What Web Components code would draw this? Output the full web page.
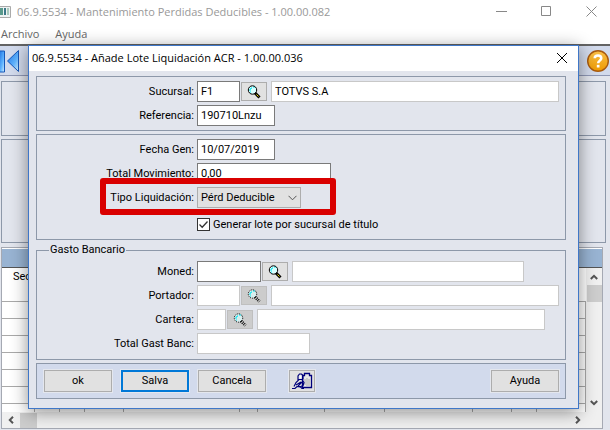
<!DOCTYPE html>
<html lang="es">
<head>
<meta charset="utf-8">
<title>Mantenimiento Perdidas Deducibles</title>
<style>
  html, body { height: 100%; margin: 0; }
  body { font: 11px/14px Roboto, "Liberation Sans", sans-serif; color: #000; background: #e2e5ed; overflow: hidden; }
</style>
</head>
<body>
<app-window caption="06.9.5534 - Mantenimiento Perdidas Deducibles - 1.00.00.082">
  <modal-dialog slot="dialog" caption="06.9.5534 - Añade Lote Liquidación ACR - 1.00.00.036">
    <group-box>
      <form-field label="Sucursal:" value="F1" size="43">
        <lookup-button label="Buscar sucursal"></lookup-button>
        <text-box label="Nombre de la sucursal" value="TOTVS S.A"></text-box>
      </form-field>
      <form-field label="Referencia:" value="190710Lnzu" size="78"></form-field>
    </group-box>
    <group-box>
      <form-field label="Fecha Gen:" value="10/07/2019" size="78"></form-field>
      <form-field label="Total Movimiento:" value="0,00" size="134"></form-field>
      <select-field label="Tipo Liquidación:" value="Pérd Deducible"></select-field>
      <check-field label="Generar lote por sucursal de título"></check-field>
    </group-box>
    <group-box legend="Gasto Bancario">
      <form-field label="Moned:" size="64">
        <lookup-button label="Buscar moneda"></lookup-button>
        <text-box label="Nombre de la moneda" size="232"></text-box>
      </form-field>
      <form-field label="Portador:" size="43" quiet>
        <lookup-button label="Buscar portador" disabled></lookup-button>
        <text-box label="Nombre del portador"></text-box>
      </form-field>
      <form-field label="Cartera:" size="29" quiet>
        <lookup-button label="Buscar cartera" disabled></lookup-button>
        <text-box label="Nombre de la cartera" size="288"></text-box>
      </form-field>
      <form-field label="Total Gast Banc:" size="113" quiet></form-field>
    </group-box>
    <button-bar slot="footer">
      <push-button>ok</push-button>
      <push-button primary>Salva</push-button>
      <push-button>Cancela</push-button>
      <push-button icon label="Adjuntar">
        <svg width="24" height="18" viewBox="0 0 24 18">
          <path d="M12.500 3.500h2v-2h5v2h2v12h-9z" fill="#e8e8e8" stroke="#00007b" stroke-width="1.300"/>
          <path d="M15 7v6M17 6v8M19 7v7" stroke="#aaa"/>
          <path d="M2 16.500h3l2-2h3l2 2h2M4 14.500l2-4 3-3h3l2 3-1 3-3 1.500-3-.5M8 8V4l1.500-2h2L13 3.500v4M6 13l5-3M8 14l4-4" fill="none" stroke="#00007b" stroke-width="1.200"/>
          <path d="M9.500 3.500h2v3h-2z" fill="#fff"/>
        </svg>
      </push-button>
      <push-button slot="end">Ayuda</push-button>
    </button-bar>
  </modal-dialog>
</app-window>

<script>
const define = (name, template, setup) => {
  const tpl = document.createElement('template');
  tpl.innerHTML = '<style>*{box-sizing:border-box}button,input,select{font:inherit;color:inherit;margin:0}</style>' + template;
  customElements.define(name, class extends HTMLElement {
    connectedCallback() {
      if (this.shadowRoot) return;
      const root = this.attachShadow({ mode: 'open' });
      root.append(tpl.content.cloneNode(true));
      if (setup) setup(this, root);
    }
  });
};

define('text-box', `
  <style>
    :host { display: block; flex: 1; min-width: 0; }
    :host([size]) { flex: none; }
    input { display: block; width: 100%; height: 21px; padding: 0 3px; border: 1px solid #c8c8c8; border-radius: 0; background: #fff; }
  </style>
  <input type="text" readonly>`,
  (el, root) => {
    const input = root.querySelector('input');
    input.value = el.getAttribute('value') || '';
    input.setAttribute('aria-label', el.getAttribute('label'));
    if (el.hasAttribute('size')) el.style.width = el.getAttribute('size') + 'px';
  });

define('lookup-button', `
  <style>
    :host { display: block; }
    button { display: grid; place-items: center; width: 26px; height: 19px; padding: 0; border: 1px solid #adadad; background: #e1e1e1; }
    button:disabled { background: #ccc; border-color: #bfbfbf; }
    :host([disabled]) .line { stroke-dasharray: 1 1; }
    :host([disabled]) .handle { stroke-dasharray: 1 1; }
    :host([disabled]) .shine { fill: #d8eeee; }
    :host([disabled]) .grip { stroke: #bbb; }
  </style>
  <button type="button">
    <svg width="14" height="14" viewBox="0 0 14 14">
      <circle class="shine" cx="5.500" cy="5" r="4" fill="#d8ffff"/>
      <path d="M3 6V4h1V3h1M6 2h2M3 7h1" fill="none" stroke="#00e5f0"/>
      <circle class="line" cx="5.500" cy="5" r="4.200" fill="none" stroke="#000"/>
      <path class="handle" d="M8 8l4.500 4.500" stroke="#000" stroke-width="3"/>
      <path class="grip" d="M9.500 9.500l2 2" stroke="#f0e000"/>
    </svg>
  </button>`,
  (el, root) => {
    const b = root.querySelector('button');
    b.setAttribute('aria-label', el.getAttribute('label'));
    b.disabled = el.hasAttribute('disabled');
  });

define('form-field', `
  <style>
    :host { display: grid; grid-template-columns: 157px 1fr; column-gap: 3px; align-items: center; }
    label { text-align: right; }
    div { display: flex; align-items: center; gap: 1px; min-width: 0; }
    ::slotted(text-box) { margin-left: 3px; }
    input { flex: none; height: 21px; padding: 0 3px 1px; border: 1px solid #7a7a7a; border-radius: 0; background: #fff; }
    :host([quiet]) input { border-color: #c8c8c8; }
  </style>
  <label for="f"></label>
  <div><input id="f" type="text"><slot></slot></div>`,
  (el, root) => {
    root.querySelector('label').textContent = el.getAttribute('label');
    const input = root.querySelector('input');
    input.value = el.getAttribute('value') || '';
    input.style.width = el.getAttribute('size') + 'px';
  });

define('select-field', `
  <style>
    :host { display: grid; grid-template-columns: 157px 1fr; column-gap: 3px; align-items: center; position: relative; }
    label { text-align: right; }
    .pick { display: flex; align-items: center; }
    select { appearance: none; width: 104px; height: 21px; padding: 0 3px; border: 1px solid #adadad; border-radius: 0; background: #e1e1e1; }
    svg { margin-left: -13px; pointer-events: none; }
    .mark { position: absolute; left: 63px; top: -9px; width: 236px; height: 37px; border: 6px solid #d90000; border-radius: 3px; pointer-events: none; }
  </style>
  <label for="s"></label>
  <div class="pick"><select id="s"><option></option></select>
    <svg width="9" height="6" viewBox="0 0 9 6"><path d="M.5.800l4 4 4-4" fill="none" stroke="#555"/></svg></div>
  <div class="mark"></div>`,
  (el, root) => {
    root.querySelector('label').textContent = el.getAttribute('label');
    root.querySelector('option').textContent = el.getAttribute('value');
  });

define('check-field', `
  <style>
    :host { display: flex; align-items: center; gap: 3px; height: 21px; margin: 3px 0 0 160px; }
    input { appearance: none; width: 13px; height: 13px; border: 1px solid #333; background: #fff; }
    input:checked { background: #fff url("data:image/svg+xml,%3Csvg xmlns='http://www.w3.org/2000/svg' viewBox='0 0 11 11'%3E%3Cpath d='M1.500 5.500l2.700 2.700 5.300-5.700' fill='none' stroke='%23333' stroke-width='1.300'/%3E%3C/svg%3E") center / 11px 11px no-repeat; }
  </style>
  <input id="c" type="checkbox" checked><label for="c"></label>`,
  (el, root) => { root.querySelector('label').textContent = el.getAttribute('label'); });

define('group-box', `
  <style>
    :host { display: block; }
    fieldset { display: grid; gap: 3px; margin: 0; min-width: 0; padding: 4px 6px 4px 0; border: 1px solid #8d98a9; }
    legend { margin-left: 12px; padding: 0 1px; }
    legend:empty { display: none; }
    :host([legend]) fieldset { padding: 4px 6px 5px 0; }
  </style>
  <fieldset><legend></legend><slot></slot></fieldset>`,
  (el, root) => { root.querySelector('legend').textContent = el.getAttribute('legend') || ''; });

define('push-button', `
  <style>
    :host { display: block; }
    button { display: grid; place-items: center; width: 68px; height: 22px; padding: 0; border: 1px solid #adadad; background: #e1e1e1; box-shadow: 0 0 0 1px #e4e7ee; }
    :host([primary]) button { border: 2px solid #0078d7; }
    :host([icon]) button { width: 26px; }
  </style>
  <button type="button"><slot></slot></button>`,
  (el, root) => {
    if (el.hasAttribute('label')) root.querySelector('button').setAttribute('aria-label', el.getAttribute('label'));
  });

define('button-bar', `
  <style>
    :host { display: flex; align-items: center; gap: 9px; height: 34px; padding: 0 6px 0 7px; border: 1px solid #8d98a9; background: #d2daec; }
    ::slotted([icon]) { margin-left: 14px; }
    .end { margin-left: auto; }
  </style>
  <slot></slot><div class="end"><slot name="end"></slot></div>`);

define('modal-dialog', `
  <style>
    :host { display: block; border: 1px solid #3f77c8; background: #e2e5ed; box-shadow: 0 3px 16px rgba(0,0,0,.45); }
    header { display: flex; align-items: center; justify-content: space-between; height: 25px; padding: 0 10px 2px 3px; background: #fff; font-family: "Open Sans", sans-serif; }
    button { display: grid; padding: 0; border: 0; background: none; }
    main { display: grid; gap: 3px; padding: 5px 12px 9px 7px; }
  </style>
  <header><span></span>
    <button type="button" aria-label="Cerrar"><svg width="12" height="12" viewBox="0 0 12 12"><path d="M1 1l10 10M11 1L1 11" stroke="#000" fill="none"/></svg></button>
  </header>
  <main><slot></slot><slot name="footer"></slot></main>`,
  (el, root) => { root.querySelector('span').textContent = el.getAttribute('caption'); });

define('scroll-bar', `
  <style>
    :host { display: flex; align-items: center; justify-content: space-between; background: #f0f0f0; padding: 0 5px; }
    :host([vertical]) { flex-direction: column; padding: 6px 0; }
    i { width: 17px; height: 15px; background: #cdcdcd; }
    :host([vertical]) i { width: 15px; height: 17px; margin-top: 5px; }
    b { flex: 1; }
    :host(:not([vertical])) i { margin-left: 5px; }
    :host(:not([vertical])) svg { transform: rotate(-90deg); }
  </style>
  <svg width="8" height="6" viewBox="0 0 8 6"><path d="M.8 5L4 1.800 7.200 5" fill="none" stroke="#555" stroke-width="2"/></svg>
  <i></i><b></b>
  <svg width="8" height="6" viewBox="0 0 8 6"><path d="M.8 1L4 4.200 7.200 1" fill="none" stroke="#555" stroke-width="2"/></svg>`);

define('data-grid', `
  <style>
    :host { display: grid; grid-template: 20px 1fr 16px / 1fr 16px; border: 1px solid #a5a9b3; background: #fff; overflow: hidden; }
    .band { grid-column: 1 / -1; margin-top: 1px; background: #98b3d2; border-bottom: 1px solid #555; }
    .body { overflow: hidden; min-height: 0; }
    table { width: 100%; border-collapse: separate; border-spacing: 0; table-layout: fixed; }
    th, td { padding: 0; height: 17px; border: 0 solid #a9a9a9; border-width: 0 1px 1px 0; }
    th { height: 34px; font-weight: normal; text-align: left; vertical-align: top; padding: 2px 0 0 11px; border-right: 0; }
    .h { grid-column: 1 / -1; padding-right: 20px; }
  </style>
  <div class="band"></div>
  <div class="body"><table><colgroup></colgroup><thead><tr></tr></thead><tbody></tbody></table></div>
  <scroll-bar vertical></scroll-bar>
  <scroll-bar class="h"></scroll-bar>`,
  (el, root) => {
    const widths = [33, 25, 25, 39, 116, 18, 67, 60, 88, 39, 25];
    root.querySelector('colgroup').innerHTML = widths.map(w => `<col style="width:${w}px">`).join('') + '<col>';
    root.querySelector('thead tr').innerHTML = '<th>Sec</th>' + '<th></th>'.repeat(widths.length);
    root.querySelector('tbody').innerHTML = ('<tr>' + '<td></td>'.repeat(widths.length + 1) + '</tr>').repeat(7);
  });

define('app-window', `
  <style>
    :host { display: flex; flex-direction: column; height: 100vh; position: relative; }
    header, nav { font-family: "Open Sans", sans-serif; background: #fff; }
    header { display: flex; align-items: center; height: 23px; flex: none; color: #999; }
    header span { margin: 0 auto 0 6px; }
    header button { display: grid; padding: 0; border: 0; background: none; margin-right: 34px; }
    header button:last-child { margin-right: 13px; }
    nav { display: flex; gap: 16px; height: 21px; flex: none; padding: 4px 1px 0; color: #666; }
    nav a { color: inherit; text-decoration: none; }
    .tools { display: flex; align-items: center; justify-content: space-between; height: 32px; flex: none; border-top: 2px solid #646464; border-bottom: 1px solid #8f98b5; background: #d2daec; }
    .tools button { display: grid; padding: 0; border: 0; background: none; }
    section { display: grid; gap: 3px; padding: 5px 4px 0 1px; }
    section div { border: 1px solid #8d98a9; height: 55px; }
    section div + div { height: 104px; }
    data-grid { flex: 1; min-height: 0; margin: 4px 7px 1px 1px; }
    ::slotted([slot=dialog]) { position: absolute; left: 28px; right: 31px; top: 45px; }
  </style>
  <header>
    <svg width="11" height="12" viewBox="0 0 11 12"><path d="M0 .5h10.500v11H0" fill="#eef2f2" stroke="#aaa"/><path d="M0 2h3v7H0z" fill="#5a9a8c"/><path d="M4 2h2v7H4z" fill="#3c7888"/><path d="M7 2h2v7H7z" fill="#a9c9bc"/></svg>
    <span></span>
    <button type="button" aria-label="Minimizar"><svg width="11" height="11" viewBox="0 0 11 11"><path d="M0 5.500h11" stroke="#888"/></svg></button>
    <button type="button" aria-label="Maximizar"><svg width="11" height="11" viewBox="0 0 11 11"><path d="M.5.500h9v9h-9z" stroke="#888" fill="none"/></svg></button>
    <button type="button" aria-label="Cerrar"><svg width="11" height="11" viewBox="0 0 11 11"><path d="M.5.500l10 10M10.500.500l-10 10" stroke="#888"/></svg></button>
  </header>
  <nav><a href="#archivo">Archivo</a><a href="#ayuda">Ayuda</a></nav>
  <div class="tools">
    <button type="button" aria-label="Primero"><svg width="20" height="24" viewBox="0 0 20 24">
      <defs><linearGradient id="g" x1="0" y1="0" x2="1" y2="1"><stop offset="0" stop-color="#1c6fe0"/><stop offset=".6" stop-color="#5fb4ff"/><stop offset="1" stop-color="#d4f0ff"/></linearGradient></defs>
      <path d="M-1 2h5.500v21H-1z" fill="url(#g)" stroke="#1557b8"/><path d="M18.500 1.500v21L7.500 12z" fill="url(#g)" stroke="#1557b8"/></svg></button>
    <button type="button" aria-label="Ayuda"><svg width="24" height="24" viewBox="0 0 24 24">
      <defs><linearGradient id="o" x1="0" y1="0" x2="0" y2="1"><stop offset="0" stop-color="#f9c04a"/><stop offset="1" stop-color="#ee9a00"/></linearGradient></defs>
      <circle cx="12" cy="12" r="10.300" fill="url(#o)" stroke="#a85a10" stroke-width="1.400"/>
      <path d="M8.700 9.300C8.700 5.600 15.300 5.600 15.300 9.300c0 2.300-3.200 2.400-3.200 5" fill="none" stroke="#fff" stroke-width="2.500"/><path d="M10.800 15.800h2.700v2.700h-2.700z" fill="#fff"/></svg></button>
  </div>
  <section><div></div><div></div></section>
  <data-grid></data-grid>
  <slot name="dialog"></slot>`,
  (el, root) => { root.querySelector('span').textContent = el.getAttribute('caption'); });
</script>
</body>
</html>
